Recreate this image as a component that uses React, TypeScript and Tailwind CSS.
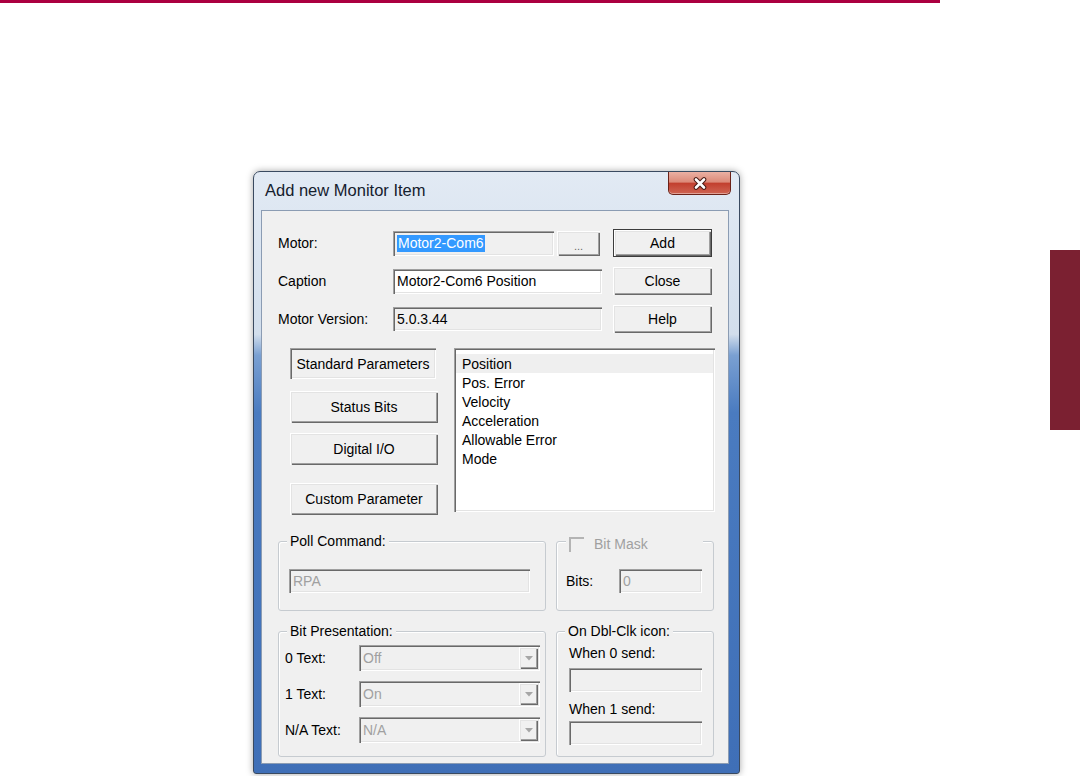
import React from "react";

// Win classic 3D edges
const sunken =
  "shadow-[inset_1px_1px_0_#a0a0a0,inset_2px_2px_0_#696969,inset_-1px_-1px_0_#ffffff,inset_-2px_-2px_0_#e3e3e3]";
const raised =
  "shadow-[inset_1px_1px_0_#ffffff,inset_2px_2px_0_#e3e3e3,inset_-1px_-1px_0_#696969,inset_-2px_-2px_0_#a0a0a0]";

function Field({
  value,
  white,
  disabled,
  className = "",
  children,
}: {
  value?: string;
  white?: boolean;
  disabled?: boolean;
  className?: string;
  children?: React.ReactNode;
}) {
  return (
    <div
      className={`${sunken} ${white ? "bg-white" : "bg-[#f0f0f0]"} ${
        disabled ? "text-[#a0a0a0]" : "text-black"
      } flex items-center pl-[4px] leading-[16px] ${className}`}
    >
      {children ?? value}
    </div>
  );
}

function Button({
  label,
  className = "",
  pressed,
  isDefault,
}: {
  label: string;
  className?: string;
  pressed?: boolean;
  isDefault?: boolean;
}) {
  return (
    <div
      className={`${pressed ? sunken : raised} ${
        isDefault ? "border border-[#3c3c3c]" : ""
      } bg-[#f0f0f0] flex items-center justify-center leading-[16px] ${className}`}
    >
      {label}
    </div>
  );
}

function Group({
  legend,
  className = "",
  children,
}: {
  legend: React.ReactNode;
  className?: string;
  children?: React.ReactNode;
}) {
  return (
    <div
      className={`border border-[#c6cbd0] rounded-[3px] shadow-[inset_1px_1px_0_#ffffff] ${className}`}
    >
      {legend}
      {children}
    </div>
  );
}

function Legend({ text }: { text: string }) {
  return (
    <div className="-mt-[9px] ml-[8px] px-[3px] w-fit bg-[#f0f0f0] leading-[16px]">
      {text}
    </div>
  );
}

function Combo({ value }: { value: string }) {
  return (
    <div
      className={`${sunken} bg-[#f0f0f0] w-[181px] h-[26px] flex items-stretch p-[2px]`}
    >
      <div className="flex-1 flex items-center pl-[2px] text-[#a0a0a0] leading-[16px]">
        {value}
      </div>
      <div className={`${raised} bg-[#f0f0f0] w-[19px] flex items-center justify-center`}>
        <svg width="8" height="5" viewBox="0 0 8 5">
          <path d="M0 0 H8 L4 4.5 Z" fill="#a6a6a6" />
        </svg>
      </div>
    </div>
  );
}

const params = ["Position", "Pos. Error", "Velocity", "Acceleration", "Allowable Error", "Mode"];

function Dialog() {
  return (
    <div className="w-[487px] h-[603px] border border-[#3a4a60] rounded-t-[7px] rounded-b-[3px] bg-[linear-gradient(to_bottom,#e2eaf4_0%,#d2deec_27%,#7aa0d2_30.5%,#4a7bc0_40%,#3f6fb7_100%)] shadow-[0_0_7px_rgba(0,0,0,0.35)] flex flex-col">
      {/* title bar */}
      <div className="h-[38px] flex items-start justify-between">
        <div className="pl-[11px] mt-[8px] text-[16.5px] leading-[20px] text-[#15202e]">
          Add new Monitor Item
        </div>
        <div className="mr-[8px] w-[63px] h-[23px] rounded-b-[5px] border border-t-0 border-[#6b2218] bg-[linear-gradient(to_bottom,#eab0a3_0%,#dc8a79_45%,#c2402f_52%,#cf6553_100%)] shadow-[inset_0_-1px_0_rgba(255,255,255,0.4)] flex items-center justify-center">
          <svg width="16" height="13" viewBox="0 0 16 13">
            <path d="M4 2.5 L12 10.5 M12 2.5 L4 10.5" stroke="#4a1c16" strokeWidth="4.6" strokeLinecap="round" />
            <path d="M4 2.5 L12 10.5 M12 2.5 L4 10.5" stroke="#ffffff" strokeWidth="2.6" strokeLinecap="round" />
          </svg>
        </div>
      </div>

      {/* client area */}
      <div className="ml-[7px] w-[468px] h-[554px] border border-[#8b9cb3] bg-[#f0f0f0] text-[14px] text-black">
        <div className="pl-[16px] pt-[18px]">
          <div className="grid grid-cols-[104px_209px_99px] grid-rows-[28px_28px_28px] gap-x-[11px] gap-y-[10px] items-center">
            <div className="leading-[16px]">Motor:</div>
            <div className="flex gap-[3px] items-center">
              <Field className="w-[161px] h-[25px]">
                <span className="bg-[#3399ff] text-white leading-[17px] px-[1px]">Motor2-Com6</span>
              </Field>
              <div className={`${raised} bg-[#f0f0f0] w-[43px] h-[25px] flex items-end justify-center pb-[5px] text-[11px] leading-[10px] text-[#6a6a6a]`}>
                ...
              </div>
            </div>
            <Button label="Add" isDefault className="h-[28px]" />

            <div className="leading-[16px]">Caption</div>
            <Field white value="Motor2-Com6 Position" className="h-[25px]" />
            <Button label="Close" className="h-[28px]" />

            <div className="leading-[16px]">Motor Version:</div>
            <Field value="5.0.3.44" className="h-[24px]" />
            <Button label="Help" className="h-[28px]" />
          </div>

          <div className="flex items-start mt-[15px] ml-[12px]">
            <div className="w-[148px] flex flex-col">
              <Button label="Standard Parameters" pressed className="w-[146px] h-[31px]" />
              <Button label="Status Bits" className="mt-[12px] h-[32px]" />
              <Button label="Digital I/O" className="mt-[10px] h-[32px]" />
              <Button label="Custom Parameter" className="mt-[18px] h-[32px]" />
            </div>
            <div className={`${sunken} ml-[16px] w-[261px] h-[164px] bg-white p-[2px] pt-[6px]`}>
              {params.map((p, i) => (
                <div
                  key={p}
                  className={`h-[19px] pl-[6px] flex items-center leading-[16px] ${
                    i === 0 ? "bg-[#efefef]" : ""
                  }`}
                >
                  {p}
                </div>
              ))}
            </div>
          </div>

          <div className="flex gap-[10px] mt-[26px]">
            <Group legend={<Legend text="Poll Command:" />} className="w-[268px] h-[70px]">
              <Field disabled value="RPA" className="ml-[10px] mt-[20px] w-[241px] h-[24px]" />
            </Group>
            <Group
              className="w-[158px] h-[70px]"
              legend={
                <div className="-mt-[7px] ml-[9px] pl-[3px] w-[137px] h-[18px] bg-[#f0f0f0] flex items-center gap-[10px]">
                  <div className="w-[15px] h-[15px] border-t-2 border-l-2 border-[#b4b4b4] bg-[#f0f0f0]" />
                  <span className="text-[#a0a0a0] leading-[16px]">Bit Mask</span>
                </div>
              }
            >
              <div className="flex items-center mt-[16px] pl-[9px]">
                <div className="w-[53px] leading-[16px]">Bits:</div>
                <Field disabled value="0" className="w-[83px] h-[24px]" />
              </div>
            </Group>
          </div>

          <div className="flex gap-[10px] mt-[20px]">
            <Group legend={<Legend text="Bit Presentation:" />} className="w-[268px] h-[126px]">
              <div className="flex flex-col gap-[10px] mt-[6px]">
                {[
                  ["0 Text:", "Off"],
                  ["1 Text:", "On"],
                  ["N/A Text:", "N/A"],
                ].map(([l, v]) => (
                  <div key={l} className="flex items-center">
                    <div className="w-[80px] pl-[6px] leading-[16px]">{l}</div>
                    <Combo value={v} />
                  </div>
                ))}
              </div>
            </Group>
            <Group legend={<Legend text="On Dbl-Clk icon:" />} className="w-[158px] h-[126px]">
              <div className="pl-[12px]">
                <div className="mt-[6px] leading-[16px]">When 0 send:</div>
                <Field className="mt-[7px] w-[133px] h-[24px]" />
                <div className="mt-[9px] leading-[16px]">When 1 send:</div>
                <Field className="mt-[4px] w-[133px] h-[24px]" />
              </div>
            </Group>
          </div>
        </div>
      </div>
    </div>
  );
}

export default function App() {
  return (
    <div className="w-[1080px] h-[776px] bg-white overflow-hidden font-['Liberation_Sans',Arial,sans-serif]">
      <div className="h-[3px] w-[940px] bg-[#ab0040]" />
      <div className="flex items-start">
        <div className="ml-[253px] mt-[168px]">
          <Dialog />
        </div>
        <div className="ml-auto mt-[247px] w-[30px] h-[180px] bg-[#7b2031]" />
      </div>
    </div>
  );
}
